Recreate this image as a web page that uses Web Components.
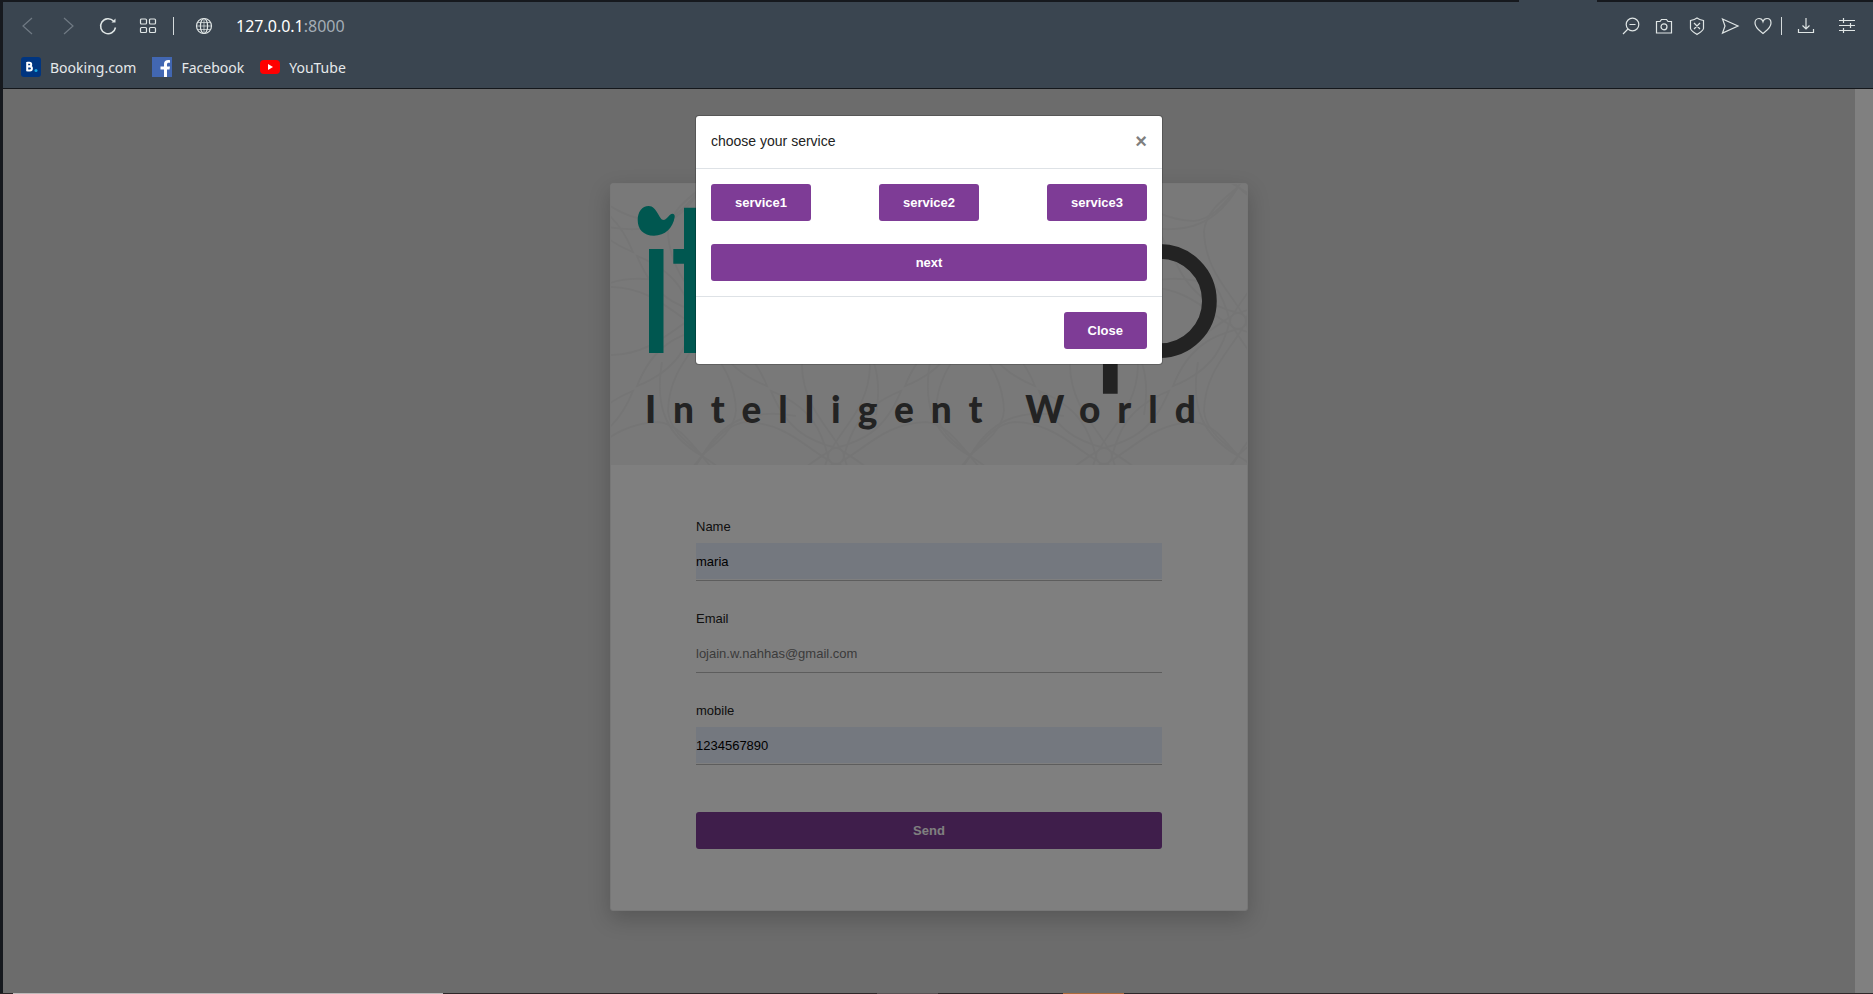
<!DOCTYPE html>
<html lang="en">
<head>
<meta charset="utf-8">
<title>itmap</title>
<style>
html, body { margin: 0; height: 100%; }
body { font-family: "Liberation Sans", Arial, sans-serif; font-size: 13px; color: #222; background: #16191e; overflow: hidden; }
</style>
</head>
<body>
<browser-window>
  <browser-toolbar slot="chrome"></browser-toolbar>
  <bookmark-bar slot="chrome"></bookmark-bar>
  <contact-card slot="page">
    <brand-banner slot="banner"></brand-banner>
    <form-field label="Name" value="maria" filled></form-field>
    <form-field label="Email" value="lojain.w.nahhas@gmail.com" type="email"></form-field>
    <form-field label="mobile" value="1234567890" type="tel" filled></form-field>
    <purple-button slot="action" block>Send</purple-button>
  </contact-card>
  <service-modal slot="overlay" heading="choose your service">
    <purple-button slot="choice">service1</purple-button>
    <purple-button slot="choice">service2</purple-button>
    <purple-button slot="choice">service3</purple-button>
    <purple-button slot="next" block>next</purple-button>
    <purple-button slot="footer">Close</purple-button>
  </service-modal>
</browser-window>

<script>
function define(name, render, ready) {
  customElements.define(name, class extends HTMLElement {
    constructor() { super(); this.attachShadow({ mode: 'open' }); }
    connectedCallback() {
      this.shadowRoot.innerHTML = render(this);
      if (ready) ready(this);
    }
  });
}

define('browser-window', () => `
<style>
:host { display: flex; flex-direction: column; height: 100vh; }
.tabs { height: 2px; display: flex; justify-content: flex-end; padding-right: 276px; }
.tabs i { width: 78px; background: #3a4550; }
.frame { flex: 1; min-height: 0; display: flex; flex-direction: column; padding-left: 3px; }
.chrome { background: #3a4550; border-bottom: 1px solid #14171b; }
.body { flex: 1; min-height: 0; display: flex; }
.view { flex: 1; position: relative; overflow: hidden; background: #d8d8d8; }
.shade { position: absolute; inset: 0; background: rgba(0,0,0,.5); padding: 26px 16px; }
.scroll { width: 18px; background: #808080; }
.taskbar { height: 1px; background: linear-gradient(90deg, #2b2526 13px, #bdb9b9 13px 443px, #2f2829 443px 877px, #5a5254 877px 938px, #2f2829 938px 1063px, #b06a3a 1063px 1124px, #2f2829 1124px); }
</style>
<div class="tabs"><i></i></div>
<div class="frame">
  <header class="chrome"><slot name="chrome"></slot></header>
  <div class="body">
    <main class="view"><slot name="page"></slot><div class="shade"><slot name="overlay"></slot></div></main>
    <div class="scroll"></div>
  </div>
</div>
<div class="taskbar"></div>`);

define('browser-toolbar', () => {
  const btn = (label, art, cls = '') =>
    `<button type="button" aria-label="${label}" class="${cls}"><svg width="18" height="18" viewBox="0 0 18 18">${art}</svg></button>`;
  return `
<style>
:host { display: flex; align-items: center; height: 48px; padding: 0 10px 0 5px; color: #dfe5e5; font-family: "Noto Sans", sans-serif; font-size: 16px; }
button { width: 40px; height: 32px; padding: 0; border: 0; background: none; color: inherit; display: grid; place-items: center; }
.dim { color: #707a84; }
svg { display: block; fill: none; stroke: currentColor; stroke-width: 1.2; overflow: visible; }
.sep { width: 1px; height: 18px; background: #d5dbdc; }
.left .sep { margin-left: 5px; }
.left, .right { display: flex; align-items: center; }
.left button:last-of-type { margin-left: 10px; }
.url { margin-left: 12px; color: #fff; }
.url span { color: #a4adb6; }
.right { margin-left: auto; }
.right button { width: 33px; }
.right button:last-of-type { margin-left: 8px; }
.right .sep { margin-left: 2px; }
.right .sep + button { margin-left: 7px; }
</style>
<div class="left">
${btn('Back', '<path d="M13 1 4 9l9 8"/>', 'dim')}
${btn('Forward', '<path d="m5 1 9 8-9 8"/>', 'dim')}
${btn('Reload', '<path d="M16.500 10.500A7.500 7.500 0 1 1 14.500 4" stroke-width="1.500"/><path d="M16.500 1.500v4h-4z" fill="currentColor" stroke="none"/>')}
${btn('Speed dial', '<rect x="1.500" y="2" width="6" height="5" rx="1"/><rect x="10.500" y="2" width="6" height="5" rx="1"/><rect x="1.500" y="10.500" width="6" height="5" rx="1"/><rect x="10.500" y="10.500" width="6" height="5" rx="1"/>')}
<div class="sep"></div>
${btn('Site information', '<circle cx="9" cy="9" r="7.500"/><ellipse cx="9" cy="9" rx="3.600" ry="7.500"/><path d="M1.500 9h15M9 1.500v15M2.500 5.500h13M2.500 12.500h13" stroke-width=".7"/>')}
<div class="url">127.0.0.1<span>:8000</span></div>
</div>
<div class="right">
${btn('Zoom', '<circle cx="10.500" cy="7.500" r="6.300"/><path d="M7.500 7.500h6M6 12l-5 5"/>')}
${btn('Snapshot', '<path d="M1.500 4.500H5l1.500-2h5l1.500 2h3.500v11.500h-15z"/><circle cx="9" cy="9.800" r="3"/>')}
${btn('Ad blocker', '<path d="M9 1c2 1.500 4 2 6.500 2.500v8C15 14 12 15.500 9 17.500 6 15.500 3 14 2.500 11.500v-8C5 3 7 2.500 9 1zM6 6l6 6M12 6l-6 6"/>')}
${btn('Send page', '<path d="M1.500 2 17 9 1.500 16 4 9z"/>')}
${btn('Add to bookmarks', '<path d="M9 16.500C6 14 1 11 1 6c0-2.500 1.500-4.500 4-4.500 2 0 3.500 1.300 4 3 .5-1.700 2-3 4-3 2.500 0 4 2 4 4.500 0 5-5 8-8 10.500z"/>')}
<div class="sep"></div>
${btn('Downloads', '<path d="M1.500 12v3.500h15V12M9 1v11M5.500 8.500 9 12l3.500-3.500"/>')}
${btn('Easy setup', '<path d="M1 3.500h16M1 8.500h16M1 13.500h16M5.500 1v5M12.500 6v5M5.500 11v5"/>')}
</div>`;
});

define('bookmark-bar', () => `
<style>
:host { display: flex; align-items: center; gap: 16px; height: 34px; padding: 0 18px 4px; font-family: "Noto Sans", sans-serif; font-size: 14px; }
a { display: flex; align-items: center; gap: 9px; color: #e6e9eb; text-decoration: none; }
svg { display: block; }
</style>
<a href="#booking"><svg width="20" height="20" viewBox="0 0 20 20"><rect width="20" height="20" rx="3" fill="#003580"/><path d="M6.200 5v9.200M6.200 5.800h2.300a1.600 1.600 0 0 1 0 3.400H6.200M6.200 9.400h2.700a2 2 0 0 1 0 4H6.200" fill="none" stroke="#fff" stroke-width="2"/><circle cx="15" cy="13.500" r="1.500" fill="#16a5dc"/></svg>Booking.com</a>
<a href="#facebook"><svg width="20" height="20" viewBox="0 0 20 20"><rect width="20" height="20" fill="#4267b2"/><path d="M12 20v-7.500H8.500v-3H12V7c0-3 2-4.300 6-3.800v2.600c-2.300-.2-3 .2-3 1.700v2h3l-.5 3H15V20z" fill="#fff"/></svg>Facebook</a>
<a href="#youtube"><svg width="20" height="20" viewBox="0 0 20 20"><rect x="0" y="3" width="20" height="14" rx="4" fill="#f00"/><path d="M8 7v6l5-3z" fill="#fff"/></svg>YouTube</a>`);

define('contact-card', () => `
<style>
:host { display: block; box-sizing: border-box; max-width: 638px; margin: 94px auto 0; background: #fff; border: 1px solid #eee; border-radius: 3px; box-shadow: 0 8px 22px rgba(0,0,0,.2); }
form { padding: 51px 85px 61px; }
.fields { display: grid; gap: 27px; margin-bottom: 47px; }
</style>
<slot name="banner"></slot>
<form><div class="fields"><slot></slot></div><slot name="action"></slot></form>`);

define('brand-banner', () => {
  const turn = (id, angles) => angles.map(a => `<use href="#${id}" transform="rotate(${a})"/>`).join('');
  const quarters = [0, 90, 180, 270];
  const cols = [-43, 91, 225, 359, 493, 627], rows = [3, 137, 272];
  const nodes = rows.flatMap((y, r) => cols.map((x, c) =>
    `<use href="#${(r + c) % 2 ? 'knot' : 'flower'}" x="${x}" y="${y}"/>`)).join('');
  return `
<style>
:host { display: block; background: #f3f3f3; }
svg { display: block; width: 100%; height: auto; }
.lines { fill: none; stroke: #ebebeb; stroke-width: 2; }
text { font-family: Lato, sans-serif; font-weight: 900; font-size: 37px; letter-spacing: 17px; fill: #464646; }
</style>
<svg viewBox="0 0 636 281" role="img" aria-label="Intelligent World">
  <defs>
    <path id="petal" d="M-5 -6C8 -30 33 -50 34 -90C32 -110 14 -122 0 -134C-14 -122 -32 -110 -34 -90C-33 -50 -8 -30 5 -6"/>
    <path id="ray" d="M6 -5C-6 -26 -18 -50 0 -92C18 -50 6 -26 -6 -5"/>
    <path id="leafarc" d="M0 0C20 -34 46 -48 94 -40"/>
    <g id="flower"><circle r="8"/>${turn('petal', quarters)}${turn('ray', [45, 135, 225, 315])}</g>
    <g id="knot">${turn('leafarc', quarters)}</g>
  </defs>
  <g class="lines">${nodes}</g>
  <g fill="#00aea0">
    <path d="M37.700 22C46 22 48 36 52.500 36C56 36 58 29.700 61.500 29.700C63 29.700 64 31 63.700 33C62 44 54 51.700 43 51.700C32 51.700 26.700 45 26.700 36C26.700 28 31 22 37.700 22z"/>
    <rect x="38" y="65" width="14.500" height="104"/>
    <path d="M73 23.700h14.500V65H102v14.700H87.500V169H73V79.700H62.300V65H73z"/>
  </g>
  <g fill="none" stroke="#464646" stroke-width="14.700">
    <circle cx="548.700" cy="117" r="49.700"/><path d="M499.300 117v92.700"/>
  </g>
  <text x="34" y="239">Intelligent World</text>
</svg>`;
});

define('form-field', (el) => `
<style>
:host { display: block; }
label { display: block; line-height: 21px; margin-bottom: 6px; }
.box { border-bottom: 1px solid #bbb; padding-bottom: 1px; }
input { display: block; box-sizing: border-box; width: 100%; height: 36px; padding: 0; border: 0; border-radius: 0; outline: 0; background: #fff; color: #777; font: inherit; }
:host([filled]) input { background: #e8f0fe; color: #000; }
</style>
<label for="control">${el.getAttribute('label')}</label>
<div class="box"><input id="control" type="${el.getAttribute('type') || 'text'}" value="${el.getAttribute('value')}"></div>`);

define('purple-button', () => `
<style>
:host { display: block; }
button { display: block; height: 37px; padding: 0 24px; border: 0; border-radius: 3px; background: #7e3c96; color: #fff; font: inherit; font-weight: 700; }
:host([block]) button { width: 100%; }
</style>
<button type="button"><slot></slot></button>`);

define('service-modal', (el) => `
<style>
:host { display: block; box-sizing: border-box; max-width: 468px; margin: 0 auto; background: #fff; background-clip: padding-box; border: 1px solid rgba(0,0,0,.2); border-radius: 4px; }
header { display: flex; justify-content: space-between; padding: 15px 15px 16px; line-height: 21px; border-bottom: 1px solid #dee2e6; font-size: 14px; }
h5 { margin: 0; font-size: 14px; font-weight: 400; color: #222; }
.x { border: 0; padding: 0; background: none; color: #7f7f7f; font: 700 20px/18px "Liberation Sans", Arial, sans-serif; height: 19px; }
.body { display: grid; gap: 23px; padding: 15px; }
.choices { display: flex; justify-content: space-between; }
footer { display: flex; justify-content: flex-end; padding: 15px; border-top: 1px solid #dee2e6; }
</style>
<header><h5>${el.getAttribute('heading')}</h5><button class="x" type="button" aria-label="Dismiss">×</button></header>
<div class="body"><div class="choices"><slot name="choice"></slot></div><slot name="next"></slot></div>
<footer><slot name="footer"></slot></footer>`,
(el) => { el.setAttribute('role', 'dialog'); el.setAttribute('aria-label', el.getAttribute('heading')); });
</script>
</body>
</html>
